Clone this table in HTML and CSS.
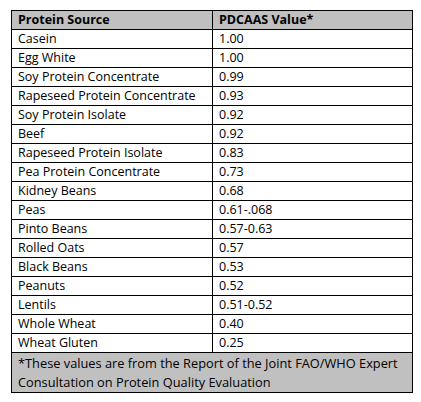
FILE: index.html
```html
<!DOCTYPE html>
<html lang="en">

<head>
    <meta charset="UTF-8">
    <meta name="viewport" content="width=device-width, initial-scale=1.0">
    <title>PDCAAS Values</title>
    <link rel="stylesheet" href="styles.css">
</head>

<body>
    <table class="pdcaas">
        <colgroup>
            <col class="col-source">
            <col class="col-value">
        </colgroup>
        <thead>
            <tr>
                <th>Protein Source</th>
                <th>PDCAAS Value*</th>
            </tr>
        </thead>
        <tbody>
            <tr><td>Casein</td><td>1.00</td></tr>
            <tr><td>Egg White</td><td>1.00</td></tr>
            <tr><td>Soy Protein Concentrate</td><td>0.99</td></tr>
            <tr><td>Rapeseed Protein Concentrate</td><td>0.93</td></tr>
            <tr><td>Soy Protein Isolate</td><td>0.92</td></tr>
            <tr><td>Beef</td><td>0.92</td></tr>
            <tr><td>Rapeseed Protein Isolate</td><td>0.83</td></tr>
            <tr><td>Pea Protein Concentrate</td><td>0.73</td></tr>
            <tr><td>Kidney Beans</td><td>0.68</td></tr>
            <tr><td>Peas</td><td>0.61-.068</td></tr>
            <tr><td>Pinto Beans</td><td>0.57-0.63</td></tr>
            <tr><td>Rolled Oats</td><td>0.57</td></tr>
            <tr><td>Black Beans</td><td>0.53</td></tr>
            <tr><td>Peanuts</td><td>0.52</td></tr>
            <tr><td>Lentils</td><td>0.51-0.52</td></tr>
            <tr><td>Whole Wheat</td><td>0.40</td></tr>
            <tr><td>Wheat Gluten</td><td>0.25</td></tr>
        </tbody>
        <tfoot>
            <tr class="note-row">
                <td colspan="2" class="note">*These values are from the Report of the Joint FAO/WHO Expert Consultation on Protein Quality Evaluation</td>
            </tr>
        </tfoot>
    </table>
</body>

</html>
```

FILE: styles.css
```css
body {
    margin: 0;
    background-color: #ffffff;
    color: #000;
    font-family: "Open Sans", "Liberation Sans", sans-serif;
    font-size: 12.5px;
}

.pdcaas {
    margin: 10px 0 0 11px;
    width: 402px;
    border-collapse: collapse;
    border: 1px solid #000;
    table-layout: fixed;
}

.col-source {
    width: 201px;
}

.pdcaas tr {
    height: 19px;
}

.pdcaas th,
.pdcaas td {
    border: 1px solid #000;
    padding: 0 6px;
    line-height: 16px;
    text-align: left;
    white-space: nowrap;
    vertical-align: middle;
}

.pdcaas th {
    background-color: #c0c0c0;
    font-weight: bold;
}

.pdcaas .note-row {
    height: 40px;
}

.pdcaas .note {
    background-color: #c0c0c0;
    white-space: normal;
    font-size: 12.8px;
    line-height: 18.5px;
}
```
